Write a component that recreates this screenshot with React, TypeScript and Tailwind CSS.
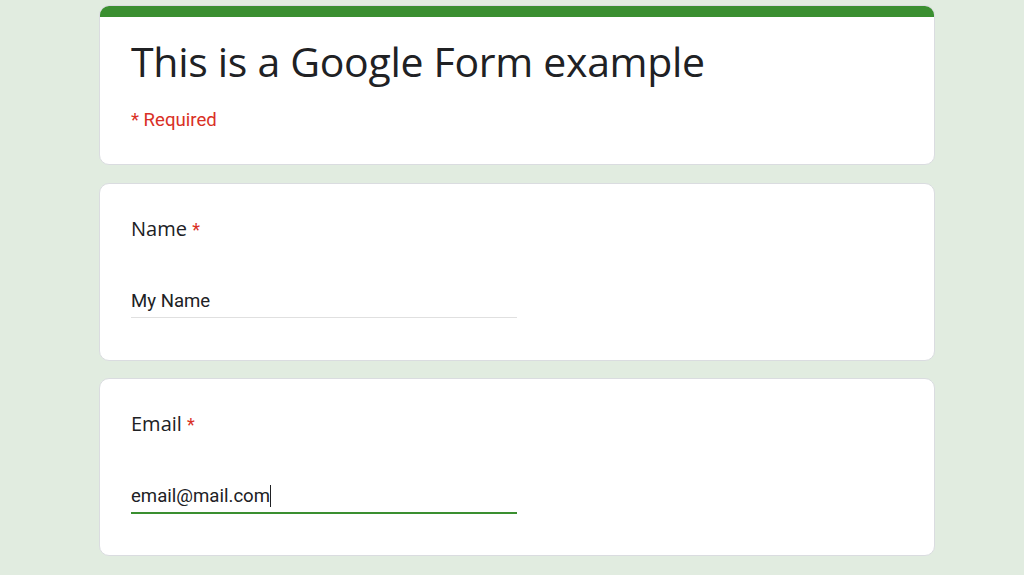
import React from "react";

export default function App() {
  return (
    <div className="w-[1024px] h-[575px] overflow-hidden bg-[#e1ece0] flex flex-col items-start">
      <div className="w-[836px] ml-[99px] mt-[5px] flex flex-col">
        <div className="bg-white rounded-[10px] border border-[#dadce0] overflow-hidden">
          <div className="h-[12px] bg-[#3a8f30] -mx-px -mt-px"></div>
          <div className="px-[31px] pt-[19px] pb-[32px]">
            <div className="h-[50px] text-[41px] leading-[50px] text-[#202124] font-['Open_Sans',sans-serif] tracking-[-0.3px] whitespace-nowrap">This is a Google Form example</div>
            <div className="mt-[22px] h-[24px] text-[18.6px] leading-[24px] text-[#d93025] font-['Roboto',sans-serif]">* Required</div>
          </div>
        </div>
        <div className="mt-[18px] bg-white rounded-[10px] border border-[#dadce0] px-[31px] pt-[31px] pb-[42px]">
          <div className="h-[28px] text-[20px] leading-[28px] text-[#202124] font-['Open_Sans',sans-serif]">Name <span className="text-[#d93025] font-['Roboto',sans-serif] text-[18px]">*</span></div>
          <div className="mt-[46px] w-[386px] h-[29px] border-b border-[#e0e0e0] pb-[4px] text-[18.6px] leading-[24px] text-[#202124] font-['Roboto',sans-serif]">My Name</div>
        </div>
        <div className="mt-[17px] bg-white rounded-[10px] border border-[#dadce0] px-[31px] pt-[31px] pb-[41px]">
          <div className="h-[28px] text-[20px] leading-[28px] text-[#202124] font-['Open_Sans',sans-serif]">Email <span className="text-[#d93025] font-['Roboto',sans-serif] text-[18px]">*</span></div>
          <div className="mt-[46px] w-[386px] h-[30px] border-b-2 border-[#3a8f30] pb-[4px] text-[18.6px] leading-[24px] text-[#202124] font-['Roboto',sans-serif] flex items-center">email@mail.com<span className="inline-block w-px h-[22px] bg-[#202124]"></span></div>
        </div>
      </div>
    </div>
  );
}
